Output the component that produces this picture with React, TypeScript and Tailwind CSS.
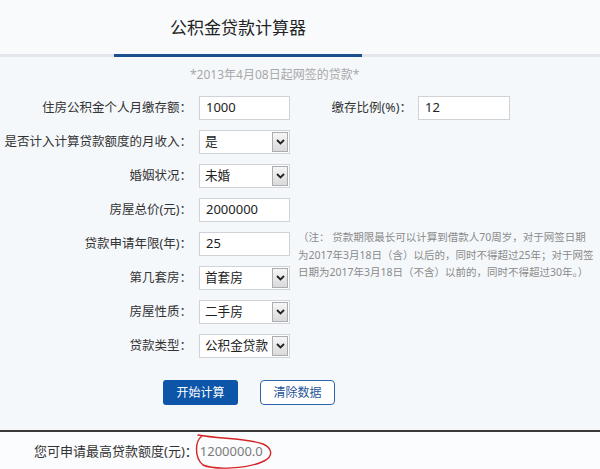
import React from "react";

const FONT = { fontFamily: '"Noto Sans", "Noto Sans CJK SC", sans-serif' };

function TextBox({ value }: { value: string }) {
  return (
    <div className="w-[91px] h-[24px] bg-white border border-[#cfd3d8] flex items-center pl-[6px] text-[13px] text-[#222]">
      {value}
    </div>
  );
}

function SelectBox({ value }: { value: string }) {
  return (
    <div className="w-[91px] h-[24px] bg-white border border-[#cfd3d8] flex items-center text-[12.6px] text-[#222]">
      <span className="flex-1 pl-[5px] whitespace-nowrap">{value}</span>
      <span className="w-[16px] h-[20px] mr-[1px] border border-[#a9adb2] bg-gradient-to-b from-[#f6f6f6] to-[#dadada] flex items-center justify-center shrink-0">
        <svg width="9" height="6" viewBox="0 0 9 6">
          <path d="M1 1 L4.5 4.5 L8 1" fill="none" stroke="#222" strokeWidth="1.8" />
        </svg>
      </span>
    </div>
  );
}

function Row({ label, children }: { label: string; children: React.ReactNode }) {
  return (
    <div className="h-[34px] flex items-center">
      <div className="w-[192px] text-right text-[12.5px] text-[#333] whitespace-nowrap">{label}</div>
      <div className="ml-[7px]">{children}</div>
    </div>
  );
}

export default function App() {
  return (
    <div className="w-[600px] h-[469px] overflow-hidden bg-[#f5f8fb] flex flex-col" style={FONT}>
      <div className="h-[54px] flex items-center bg-[#f8fafc]">
        <div className="w-[476px] text-center text-[17px] text-[#222] pt-[1px]">公积金贷款计算器</div>
      </div>
      <div className="h-[3px] bg-[#e3e7eb] flex">
        <div className="ml-[114px] w-[248px] h-full bg-[#1b4f8e]" />
      </div>
      <div className="mt-[9px] ml-[190px] text-[12px] leading-[18px] text-[#a8a8a8] whitespace-nowrap">
        *2013年4月08日起网签的贷款*
      </div>
      <div className="mt-[7px] flex">
        <div className="w-[291px] flex flex-col">
          <Row label="住房公积金个人月缴存额：">
            <TextBox value="1000" />
          </Row>
          <Row label="是否计入计算贷款额度的月收入：">
            <SelectBox value="是" />
          </Row>
          <Row label="婚姻状况：">
            <SelectBox value="未婚" />
          </Row>
          <Row label="房屋总价(元)：">
            <TextBox value="2000000" />
          </Row>
          <Row label="贷款申请年限(年)：">
            <TextBox value="25" />
          </Row>
          <Row label="第几套房：">
            <SelectBox value="首套房" />
          </Row>
          <Row label="房屋性质：">
            <SelectBox value="二手房" />
          </Row>
          <Row label="贷款类型：">
            <SelectBox value="公积金贷款" />
          </Row>
        </div>
        <div className="flex-1 flex flex-col">
          <div className="h-[34px] flex items-center">
            <div className="w-[121px] text-right text-[12.5px] text-[#333] whitespace-nowrap">缴存比例(%)：</div>
            <div className="ml-[6px] w-[92px] h-[24px] bg-white border border-[#cfd3d8] flex items-center pl-[6px] text-[13px] text-[#222]">
              12
            </div>
          </div>
          <div className="mt-[104px] pl-[7px] text-[10.5px] leading-[17.5px] text-[#8a8a8a] whitespace-nowrap">
            （注： 贷款期限最长可以计算到借款人70周岁，对于网签日期
            <br />
            为2017年3月18日（含）以后的，同时不得超过25年；对于网签
            <br />
            日期为2017年3月18日（不含）以前的，同时不得超过30年。）
          </div>
        </div>
      </div>
      <div className="mt-[17px] flex pl-[163px] gap-[22px]">
        <div className="w-[75px] h-[25px] rounded-[3px] bg-[#0c55a8] text-white text-[12px] flex items-center justify-center">
          开始计算
        </div>
        <div className="w-[75px] h-[25px] rounded-[4px] bg-white border border-[#2c66aa] text-[#1f5597] text-[12px] flex items-center justify-center">
          清除数据
        </div>
      </div>
      <div className="mt-[25px] h-[2px] bg-[#3a3a3a]" />
      <div className="flex-1 bg-[#fbfcfd] flex items-start pt-[10px]">
        <div className="ml-[34px] text-[13px] leading-[18px] text-[#333] whitespace-nowrap">您可申请最高贷款额度(元)：</div>
        <div className="relative ml-[2px] text-[13px] leading-[18px] text-[#7a7a7a]">
          1200000.0
          <svg
            className="absolute left-[-8px] top-[-8px]"
            width="86"
            height="36"
            viewBox="0 0 86 36"
          >
            <path
              d="M10 2 C 3 7, 2 23, 11 31 C 22 36, 56 35, 72 27 C 82 22, 80 14, 71 10 C 56 4, 27 5, 6 1"
              fill="none"
              stroke="#d42424"
              strokeWidth="1.4"
              strokeLinecap="round"
            />
          </svg>
        </div>
      </div>
    </div>
  );
}
